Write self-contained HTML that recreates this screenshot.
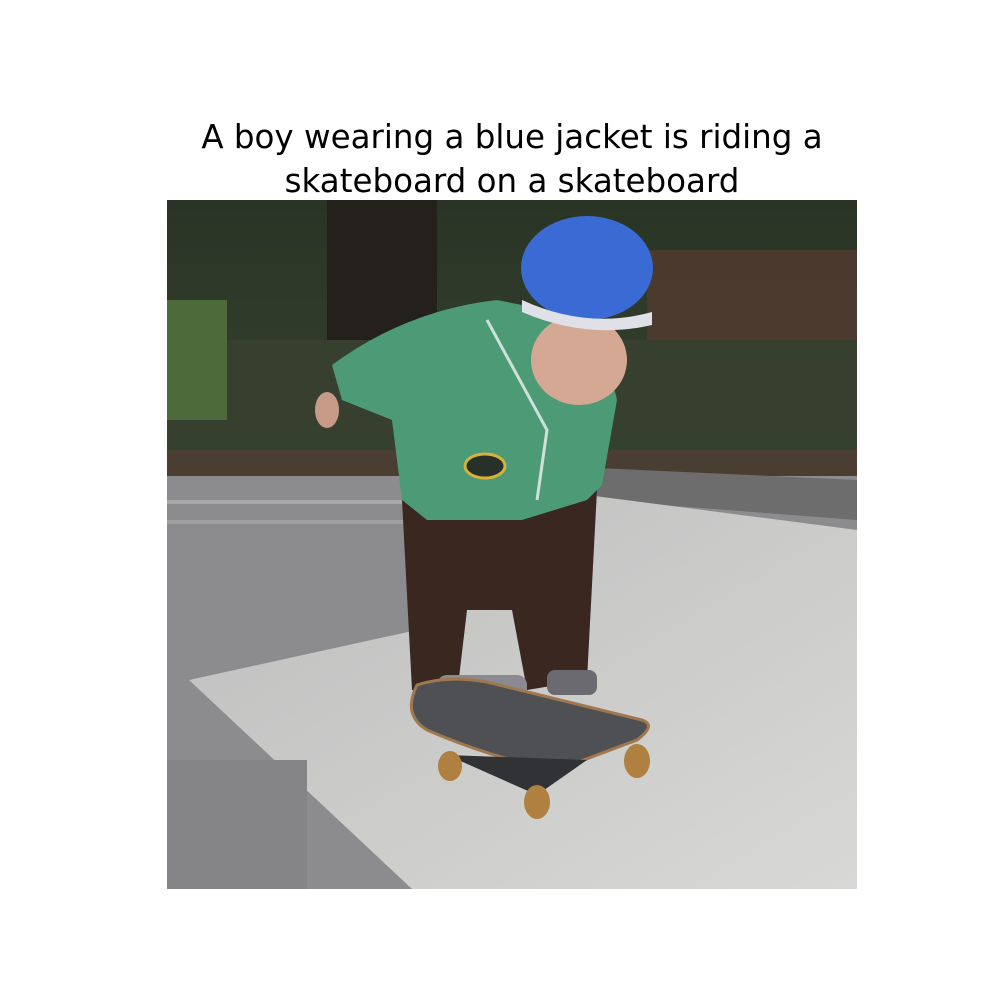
<!DOCTYPE html>
<html><head><meta charset="utf-8"><style>
html,body{margin:0;padding:0;background:#fff;width:1000px;height:1000px;overflow:hidden}
.t{position:absolute;left:0;width:1024px;text-align:center;font-family:"DejaVu Sans","Liberation Sans",sans-serif;font-size:32.5px;color:#000;line-height:44px}
</style></head><body>
<div class="t" style="top:115px">A boy wearing a blue jacket is riding a<br>skateboard on a skateboard</div>
<svg style="position:absolute;left:167px;top:200px" width="690" height="689" viewBox="0 0 690 689">
<defs>
<linearGradient id="bg" x1="0" y1="0" x2="0" y2="1"><stop offset="0" stop-color="#2a3426"/><stop offset="0.6" stop-color="#3b4a34"/><stop offset="1" stop-color="#2e3428"/></linearGradient>
<linearGradient id="ramp" x1="0" y1="0" x2="1" y2="1"><stop offset="0" stop-color="#bdbdbd"/><stop offset="1" stop-color="#d8d8d6"/></linearGradient>
</defs>
<rect width="690" height="689" fill="url(#bg)"/>
<rect x="160" y="0" width="110" height="140" fill="#24201c"/>
<rect x="480" y="50" width="210" height="180" fill="#5a3a30" opacity="0.7"/>
<rect x="0" y="140" width="690" height="100" fill="#37402f"/>
<rect x="0" y="100" width="60" height="120" fill="#4d6a3a"/>
<rect x="0" y="250" width="690" height="28" fill="#4a3e33"/>
<rect x="0" y="276" width="690" height="413" fill="#8c8c8e"/>
<rect x="0" y="300" width="240" height="4" fill="#a8a8a8"/>
<rect x="0" y="320" width="240" height="4" fill="#a0a0a0"/>
<polygon points="430,268 690,280 690,320 430,300" fill="#6d6d6d"/>
<path d="M420,295 L690,330 L690,689 L245,689 L22,480 L250,430 Q360,380 420,295 Z" fill="url(#ramp)"/>
<rect x="0" y="560" width="140" height="129" fill="#858587"/>
<!-- boy -->
<path d="M235,300 L245,490 L290,495 L300,410 L345,410 L360,490 L420,480 L430,290 Z" fill="#3a2820"/>
<path d="M165,165 Q240,110 330,100 L380,110 Q440,150 450,200 L435,285 L420,300 L355,320 L260,320 L235,300 L225,220 L175,200 Z" fill="#4c9a76"/>
<path d="M320,120 L380,230 L370,300" stroke="#cfe0d8" stroke-width="3" fill="none"/>
<ellipse cx="318" cy="266" rx="20" ry="12" fill="#28302a" stroke="#d6b23a" stroke-width="3"/>
<ellipse cx="412" cy="160" rx="48" ry="45" fill="#d4a892"/>
<ellipse cx="420" cy="68" rx="66" ry="52" fill="#3a6ad4"/>
<path d="M355,100 Q420,130 485,112 L485,125 Q420,140 355,112 Z" fill="#e0e0e8"/>
<ellipse cx="160" cy="210" rx="12" ry="18" fill="#c89a88"/>
<rect x="270" y="475" width="90" height="40" rx="10" fill="#8a8a90"/>
<rect x="380" y="470" width="50" height="25" rx="8" fill="#6a6a70"/>
<!-- skateboard -->
<path d="M250,485 Q280,475 320,482 L475,520 Q490,525 470,540 L390,570 Q330,560 260,530 Q235,515 250,485 Z" fill="#4e5054" stroke="#a07850" stroke-width="3"/>
<path d="M280,555 L420,560 L370,595 Z" fill="#303236"/>
<ellipse cx="283" cy="566" rx="12" ry="15" fill="#b08040"/>
<ellipse cx="470" cy="561" rx="13" ry="17" fill="#b08040"/>
<ellipse cx="370" cy="602" rx="13" ry="17" fill="#b08040"/>
</svg>
</body></html>
